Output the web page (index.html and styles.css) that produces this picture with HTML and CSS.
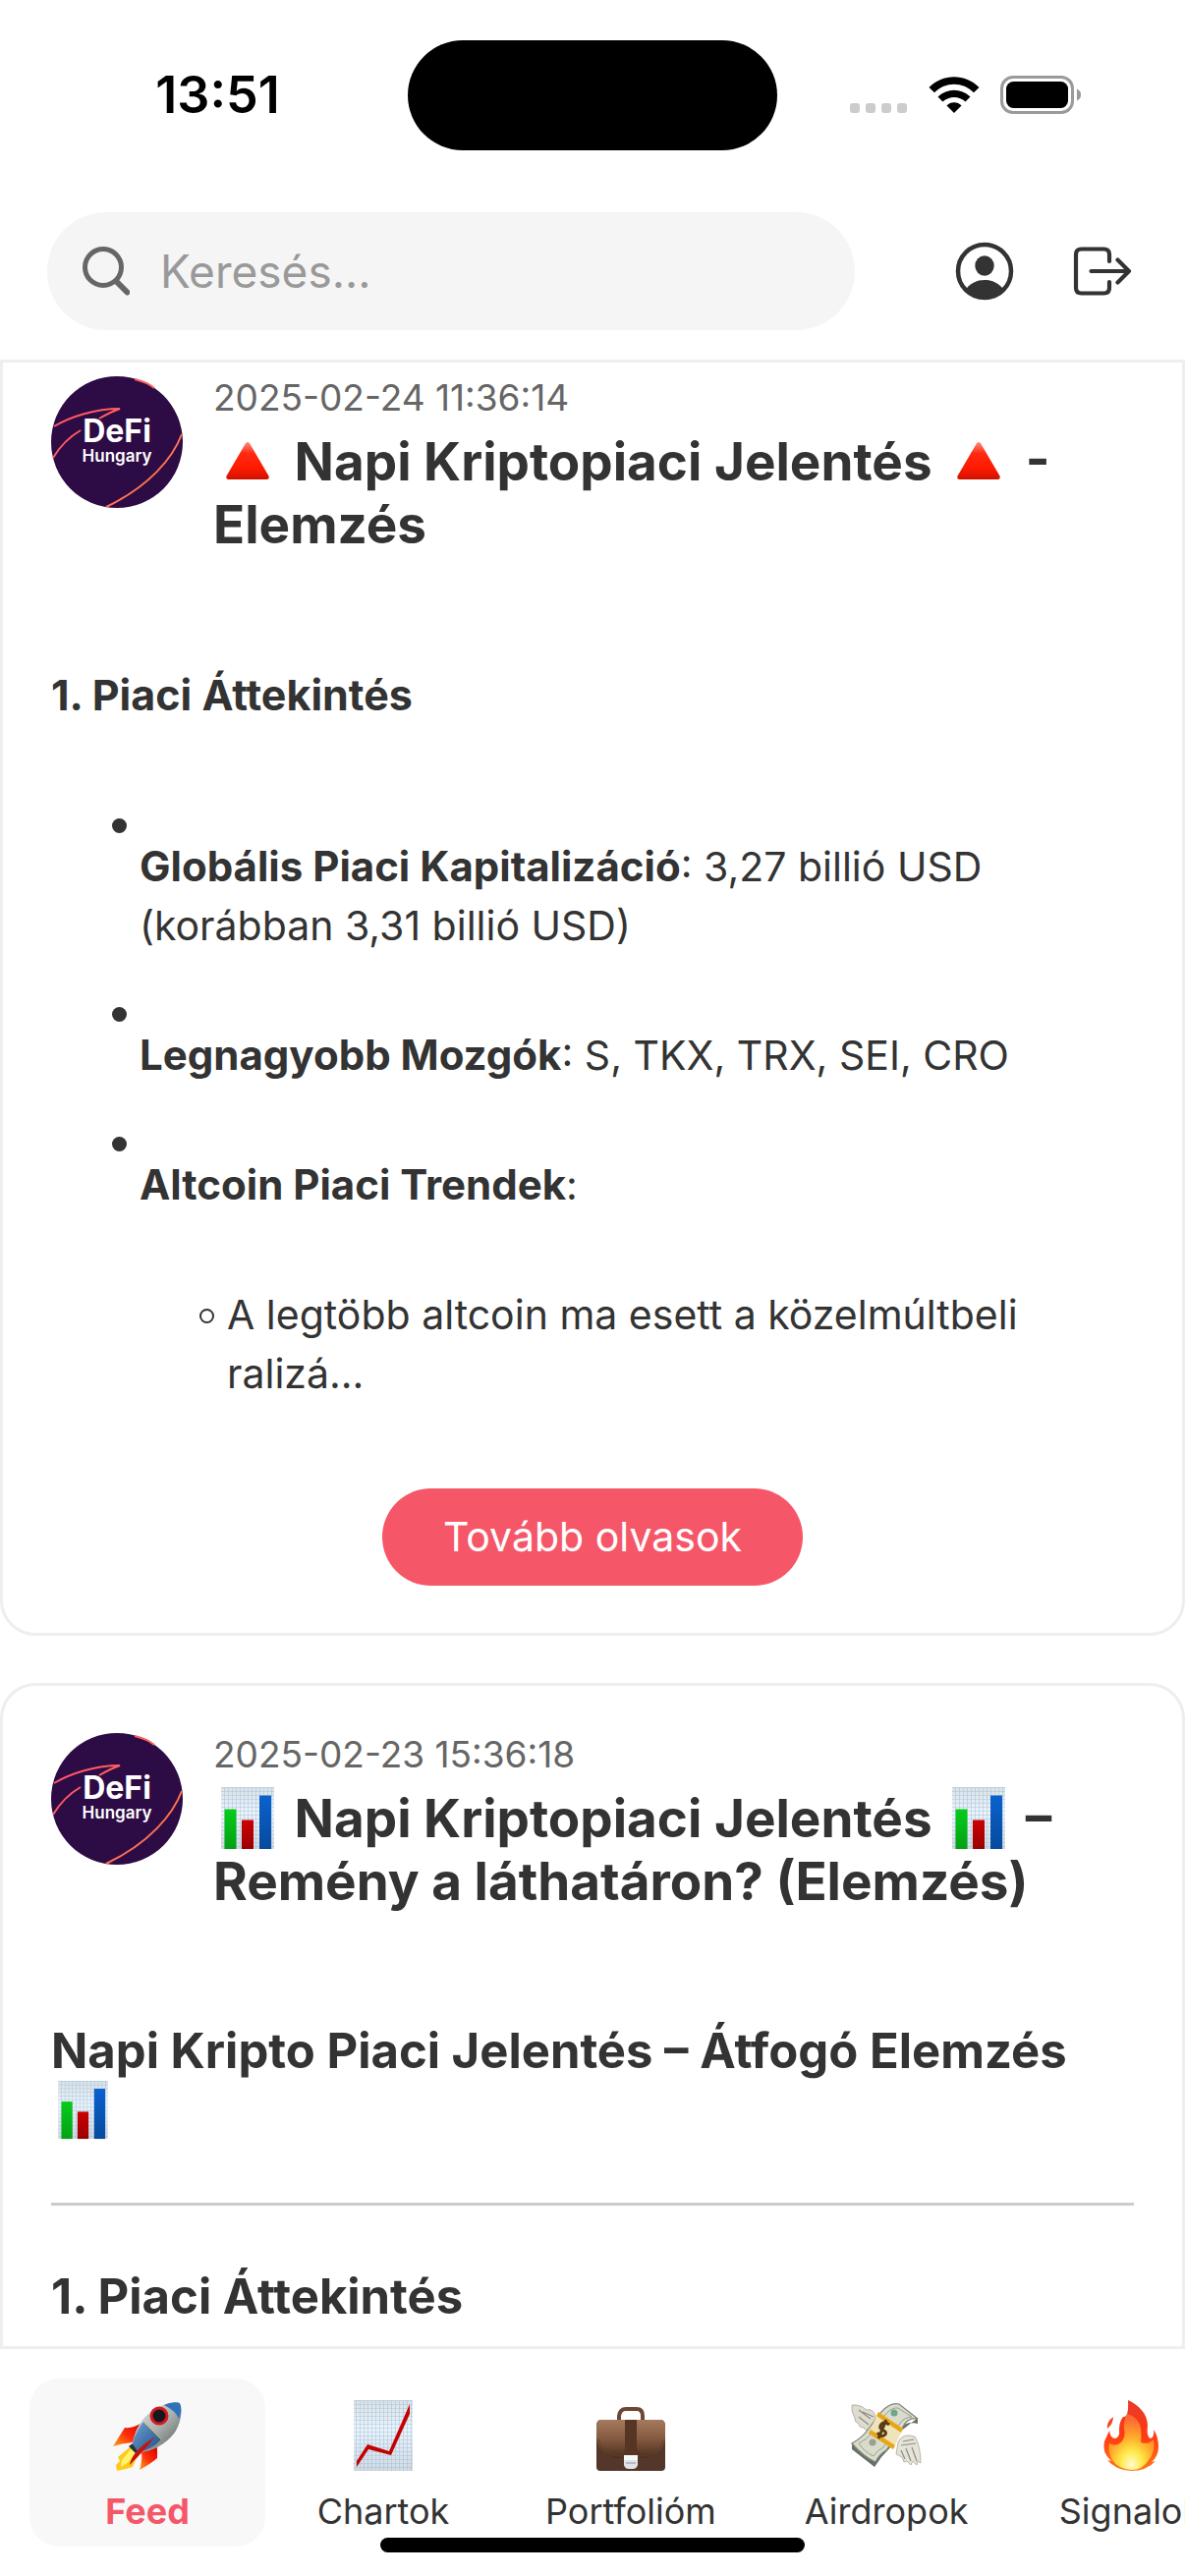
FILE: index.html
```html
<!DOCTYPE html>
<html lang="hu">
<head>
<meta charset="utf-8">
<meta name="viewport" content="width=device-width, initial-scale=1">
<title>DeFi Hungary – Feed</title>
<link rel="stylesheet" href="styles.css">
</head>
<body>
<svg class="sprite" aria-hidden="true">
  <defs>
    <linearGradient id="g-red" x1="0" y1="0" x2="0" y2="1"><stop offset="0" stop-color="#ff8a7a"/><stop offset=".3" stop-color="#ff2a12"/><stop offset=".7" stop-color="#ff1a00"/><stop offset="1" stop-color="#cc1200"/></linearGradient>
    <linearGradient id="g-paper" x1="0" y1="0" x2="0" y2="1"><stop offset="0" stop-color="#dde1e4"/><stop offset=".4" stop-color="#eef4fa"/><stop offset="1" stop-color="#d3d9df"/></linearGradient>
    <linearGradient id="g-green" x1="0" y1="0" x2="0" y2="1"><stop offset="0" stop-color="#06cc1c"/><stop offset="1" stop-color="#04a014"/></linearGradient>
    <linearGradient id="g-crimson" x1="0" y1="0" x2="0" y2="1"><stop offset="0" stop-color="#cc0000"/><stop offset="1" stop-color="#990000"/></linearGradient>
    <linearGradient id="g-blue" x1="0" y1="0" x2="0" y2="1"><stop offset="0" stop-color="#0a62cf"/><stop offset="1" stop-color="#064a9c"/></linearGradient>
    <linearGradient id="g-line" x1="0" y1="0" x2="1" y2="1"><stop offset="0" stop-color="#ff4d6d"/><stop offset="1" stop-color="#ff7f45"/></linearGradient>
    <pattern id="p-grid" width="4" height="4" patternUnits="userSpaceOnUse"><path d="M0 0H4M0 0V4" stroke="#8db9dd" stroke-width="1.600" opacity=".55"/></pattern>
    <symbol id="triangle" viewBox="0 0 64 64">
      <path d="M32 12Q33.500 12 34.500 14L53.500 46.500Q54.500 50 51.500 50H12.500Q9.500 50 10.500 46.500L29.500 14Q30.500 12 32 12Z" fill="url(#g-red)"/>
    </symbol>
    <symbol id="bars" viewBox="0 0 64 64">
      <path d="M5 0H59V63H5Z" fill="url(#g-paper)"/><path d="M5 0H59V63H5Z" fill="url(#p-grid)"/>
      <path d="M8.500 22.500h12V63h-12z" fill="url(#g-green)"/><path d="M26 33.500h12V63H26z" fill="url(#g-crimson)"/><path d="M44 8.500h12V63H44z" fill="url(#g-blue)"/>
    </symbol>
    <symbol id="logo" viewBox="0 0 134 134">
      <circle cx="67" cy="67" r="67" fill="#2d0b45"/>
      <g fill="none" stroke="url(#g-line)" stroke-width="2">
        <path d="M3 51C20 41 45 33 70 33C64 35 56 39 49 43M2 83C8 73 18 62 30 55M85 3Q98 6 105 12M133 59C124 83 100 112 56 133"/>
      </g>
    </symbol>
  </defs>
</svg>
<div class="app">
  <div class="status">
    <span class="status-time">13:51</span>
    <div class="island"></div>
    <div class="status-icons">
      <svg width="236" height="40" viewBox="0 0 236 40" aria-hidden="true">
        <g fill="#ccc"><rect y="28" width="10" height="10" rx="3"/><rect x="16" y="28" width="10" height="10" rx="3"/><rect x="32" y="28" width="10" height="10" rx="3"/><rect x="48" y="28" width="10" height="10" rx="3"/></g>
        <path d="M106 38 98.500 30.500C102 26 110 26 113.500 30.500Z"/>
        <path d="M89.500 21.500C99 12.500 113 12.500 122.500 21.500L117.500 26.500C111 20.500 101 20.500 94.500 26.500Z"/>
        <path d="M80.500 12C94.500-2.500 117.500-2.500 131.500 12L126 17.300C114.500 6 97.500 6 86 17.300Z"/>
        <rect x="154.500" y="1.500" width="72" height="36" rx="11.500" fill="none" stroke="#9a9a9a" stroke-width="3"/>
        <rect x="159" y="6" width="63" height="27" rx="7.500"/>
        <path d="M231 13.500Q235.500 16 235 19.500Q235.500 23 231 25.500Z" fill="#999"/>
      </svg>
    </div>
  </div>

  <header class="topbar">
    <label class="search">
      <svg class="search-icon" width="48" height="50" viewBox="0 0 48 50" fill="none" stroke="#666" stroke-linecap="round" aria-hidden="true"><circle cx="21" cy="21" r="18.500" stroke-width="5"/><path d="M34.500 35.500 45.500 46.500" stroke-width="6"/></svg>
      <input class="search-input" type="search" placeholder="Keresés..." aria-label="Keresés">
    </label>
    <div class="actions">
      <button class="icon-button" type="button" aria-label="Profil">
        <svg width="60" height="60" viewBox="0 0 60 60" fill="#333"><defs><clipPath id="c-face"><circle cx="30" cy="30" r="28"/></clipPath></defs><circle cx="30" cy="30" r="27" fill="none" stroke="#333" stroke-width="4.500"/><ellipse cx="30" cy="24.500" rx="9.700" ry="10.200"/><path d="M9 51C15 42 22 39 30 39S45 42 51 51V60H9Z" clip-path="url(#c-face)"/></svg>
      </button>
      <button class="icon-button" type="button" aria-label="Kijelentkezés">
        <svg width="60" height="60" viewBox="0 0 60 60" fill="none" stroke="#333" stroke-width="4.200" stroke-linecap="round" stroke-linejoin="round"><path d="M37 20V13Q37 7.500 31.500 7.500H8.500Q3 7.500 3 13V47Q3 52.500 8.500 52.500H31.500Q37 52.500 37 47V41M18.500 30H57M45.500 18.500 57 30 45.500 41.500"/></svg>
      </button>
    </div>
  </header>

  <main class="feed">
    <article class="card card-scrolled">
      <div class="card-head">
        <div class="avatar"><svg class="avatar-art" aria-hidden="true"><use href="#logo"/></svg><span class="avatar-name">DeFi</span><span class="avatar-place">Hungary</span></div>
        <div class="card-meta">
          <time class="date">2025-02-24 11:36:14</time>
          <h2 class="title"><svg class="emoji" aria-hidden="true"><use href="#triangle"/></svg> Napi Kriptopiaci Jelentés <svg class="emoji" aria-hidden="true"><use href="#triangle"/></svg> - Elemzés</h2>
        </div>
      </div>
      <div class="body">
        <p class="lead">1. Piaci Áttekintés</p>
        <ul class="list">
          <li class="item"><p class="item-text"><strong>Globális Piaci Kapitalizáció</strong>: 3,27 billió USD (korábban 3,31 billió USD)</p></li>
          <li class="item"><p class="item-text"><strong>Legnagyobb Mozgók</strong>: S, TKX, TRX, SEI, CRO</p></li>
          <li class="item"><div><p class="item-text"><strong>Altcoin Piaci Trendek</strong>:</p>
            <ul class="sublist"><li class="subitem">A legtöbb altcoin ma esett a közelmúltbeli ralizá...</li></ul></div></li>
        </ul>
      </div>
      <button class="more" type="button">Tovább olvasok</button>
    </article>

    <article class="card">
      <div class="card-head">
        <div class="avatar"><svg class="avatar-art" aria-hidden="true"><use href="#logo"/></svg><span class="avatar-name">DeFi</span><span class="avatar-place">Hungary</span></div>
        <div class="card-meta">
          <time class="date">2025-02-23 15:36:18</time>
          <h2 class="title"><svg class="emoji" aria-hidden="true"><use href="#bars"/></svg> Napi Kriptopiaci Jelentés <svg class="emoji" aria-hidden="true"><use href="#bars"/></svg> – Remény a láthatáron? (Elemzés)</h2>
        </div>
      </div>
      <div class="body">
        <h3 class="heading">Napi Kripto Piaci Jelentés – Átfogó Elemzés <svg class="emoji emoji-small" aria-hidden="true"><use href="#bars"/></svg></h3>
        <hr class="rule">
        <h3 class="heading">1. Piaci Áttekintés</h3>
      </div>
    </article>
  </main>

  <nav class="tabs">
    <a class="tab tab-active" href="#feed">
      <svg class="tab-icon" viewBox="0 0 72 72" aria-hidden="true">
        <defs><linearGradient id="g-hull" x1="0" y1="0" x2="1" y2="1"><stop offset="0" stop-color="#e8ebea"/><stop offset=".5" stop-color="#aeb4b2"/><stop offset="1" stop-color="#4d5654"/></linearGradient><linearGradient id="g-fin" x1="1" y1="0" x2="0" y2="1"><stop offset="0" stop-color="#d90000"/><stop offset=".5" stop-color="#ff2b0a"/><stop offset="1" stop-color="#ffa21a"/></linearGradient><linearGradient id="g-steel" x1="0" y1="0" x2="1" y2="1"><stop offset="0" stop-color="#6fa3d8"/><stop offset="1" stop-color="#1f4b7e"/></linearGradient></defs>
        <path d="M1 47 13 28Q22 29 30 23L21 43Q10 44 1 47Z" fill="url(#g-fin)"/>
        <path d="M46 48V59Q39 65 28 71Q31 62 30 53Z" fill="url(#g-fin)"/>
        <path d="M19 47 6 58 8 62 4 66 5 72 14 70 21 68 24 61 28 55Z" fill="#ffc91c"/><path d="M19 50 10 61 9 68 17 63 24 54Z" fill="#fff36a"/>
        <path d="M17 47 21 44 27 51 24 54Z" fill="#26343b"/>
        <path d="M21 44C24 22 42 3 67 2C73 5 71 23 63 34C55 44 41 53 27 53Z" fill="url(#g-hull)"/>
        <path d="M53 5Q61 1 69 3Q72 10 68 19Q65 11 53 5Z" fill="#2f72b8"/>
        <path d="M21 44Q24 32 32 22L50 40Q41 50 27 53Z" fill="url(#g-steel)"/><path d="M32 22 50 40" stroke="#d5b652"/>
        <path d="M43 38Q35 49 18 66Q20 52 43 38Z" fill="#c91010"/>
        <circle cx="48" cy="16" r="8" fill="#15181c" stroke="#d81820" stroke-width="3"/>
      </svg>
      <span>Feed</span>
    </a>
    <a class="tab" href="#chartok">
      <svg class="tab-icon" viewBox="0 0 72 72" aria-hidden="true"><path d="M6 0H66V72H6Z" fill="url(#g-paper)"/><path d="M6 0H66V72H6Z" fill="url(#p-grid)"/><path d="M9 62 20 45 42 52 63 4V14L44 56 21 50 9 68Z" fill="#c40000"/></svg>
      <span>Chartok</span>
    </a>
    <a class="tab" href="#portfoliom">
      <svg class="tab-icon" viewBox="0 0 72 72" aria-hidden="true">
        <defs><linearGradient id="g-case" x1="0" y1="0" x2="0" y2="1"><stop offset="0" stop-color="#a57a5c"/><stop offset=".5" stop-color="#84593f"/><stop offset="1" stop-color="#4a2d1f"/></linearGradient></defs>
        <path d="M24 20V16Q25 9 31 9H42Q48 9 48 16V20" fill="none" stroke="#6d4734" stroke-width="4"/>
        <path d="M5 20H67Q71 21 71 26V68Q71 72 67 72H5Q1 72 1 68V26Q1 21 5 20Z" fill="#55362a"/>
        <path d="M4 20H68Q71 22 71 27V38Q69 57 48 59H24Q3 57 1 38V27Q1 22 4 20Z" fill="url(#g-case)"/>
        <path d="M3 40Q6 56 25 57H47Q66 56 69 40" fill="none" stroke="#5f3d2c"/>
        <path d="M30 20H42V50Q46 53 45 60H28Q27 53 30 50Z" fill="#563525"/>
        <path d="M29 56H43V66Q42 70 38 70H34Q30 70 29 66Z" fill="#dfe3e6"/><path d="M29 56h14v5H29z" fill="#f7f8f9"/><path d="M31 64h10" stroke="#8d9499"/>
      </svg>
      <span>Portfolióm</span>
    </a>
    <a class="tab" href="#airdropok">
      <svg class="tab-icon" viewBox="0 0 72 72" aria-hidden="true">
        <path d="M1 5Q9 4 16 10Q23 8 25 17L20 32Q14 31 13 28Q8 28 8 24Q3 22 4 18Q0 12 1 5Z" fill="#dedcd1" stroke="#aaa798" stroke-width=".8"/><path d="M8 10 20 19M8 17 18 25M12 12 23 17" stroke="#8f8c7e" stroke-width="1.200"/>
        <path d="M1 44V50L24 68 31 58 44 44 52 28Q56 21 68 24V18L40 40 25 61Z" fill="#667067"/>
        <path d="M1 44Q12 38 18 29L31 12Q40 2 49 4L68 19Q58 17 53 27L36 51Q29 55 25 63Q13 58 1 44Z" fill="#d9dccb" stroke="#7d8477" stroke-width="1.200"/>
        <path d="M8 44Q16 40 22 33L34 16Q41 7 48 8L62 17Q54 17 49 25L33 48Q27 51 23 57Q14 53 8 44Z" fill="none" stroke="#979f8f"/>
        <circle cx="44" cy="13" r="3.500" fill="#6fa58c"/><circle cx="22" cy="43" r="3.500" fill="#9aa191"/>
        <path d="M28 12 53 29 43 50 18 34Z" fill="#efe3b8"/><path d="M28 12 53 29 51 33 26 16ZM20 30 45 46 43 50 18 34Z" fill="#e9a514"/>
        <path d="M39 25Q33 20 30 26C28 32 38 30 35 35Q31 39 27 33M36 20 28 39" fill="none" stroke="#5a3c12" stroke-width="3"/>
        <path d="M48 43Q52 33 65 37Q71 47 71 64L68 62 67 66 63 62 61 66 57 62 54 63 52 58 46 55Z" fill="#e6e4d9" stroke="#aaa798" stroke-width=".8"/><path d="M53 42 64 40M51 46 66 44M51 51 55 60M56 49 61 62M62 48 67 62" fill="none" stroke="#8f8c7e" stroke-width="1.200"/>
      </svg>
      <span>Airdropok</span>
    </a>
    <a class="tab" href="#signalok">
      <svg class="tab-icon" viewBox="0 0 72 72" aria-hidden="true">
        <defs><linearGradient id="g-fire" x1="0" y1="0" x2="0" y2="1"><stop offset="0" stop-color="#e83a2a"/><stop offset=".5" stop-color="#ff3a12"/><stop offset="1" stop-color="#ff7a1a"/></linearGradient><radialGradient id="g-core" cx=".5" cy=".9" r=".8"><stop offset="0" stop-color="#fffbd0"/><stop offset=".3" stop-color="#ffe94a"/><stop offset=".6" stop-color="#ffac2a"/><stop offset="1" stop-color="#ff6a35"/></radialGradient></defs>
        <path d="M33 0C44 5 53 14 53 26C52 33 53 38 56 39Q60 38 59 30Q64 37 64 48Q64 57 57 63L61 62Q52 72 36 72Q20 71 12 61L16 62Q6 53 9 42L14 31Q15 39 20 39Q25 38 24 30Q24 22 28 17Q34 18 33 0Z" fill="url(#g-fire)"/>
        <path d="M32 14Q44 17 46 29Q47 36 46 43Q54 46 59 40Q61 53 54 61Q48 71 36 71Q23 70 17 61Q12 53 14 44Q20 48 26 43Q31 37 29 29Q28 22 32 14Z" fill="url(#g-core)"/>
        <path d="M12 29Q11 22 18 17Q18 24 12 29Z" fill="#f4452a"/>
      </svg>
      <span>Signalok</span>
    </a>
    <div class="home-bar"></div>
  </nav>
</div>
</body>
</html>
```
FILE: styles.css
```css
*,
*::before {
  box-sizing: border-box;
}

body {
  margin: 0;
  background: #fff;
  color: #333;
  font-family: Inter, "Liberation Sans", sans-serif;
  font-size: 41px;
  line-height: 60px;
}

h2,
h3,
p,
ul {
  margin: 0;
  padding: 0;
}

button,
input {
  border: 0;
  background: none;
  font: inherit;
  color: inherit;
}

svg {
  display: block;
}

strong {
  font-size: 42px;
  font-weight: 700;
}

.sprite {
  position: absolute;
  width: 0;
  height: 0;
}

.app {
  display: flex;
  flex-direction: column;
  height: 100vh;
  overflow: hidden;
}

/* Status bar */
.status {
  display: grid;
  grid-template-columns: 1fr 376px 1fr;
  align-items: center;
  padding: 41px 0 0;
}

.status-time {
  padding-left: 28px;
  color: #000;
  font-size: 52px;
  font-weight: 600;
  text-align: center;
}

.island {
  height: 112px;
  border-radius: 56px;
  background: #000;
}

.status-icons {
  padding-left: 74px;
}

/* Search and account actions */
.topbar {
  display: flex;
  align-items: center;
  gap: 72px;
  padding: 63px 24px 30px 48px;
  border-bottom: 3px solid #eee;
}

.search {
  display: flex;
  flex: 1;
  align-items: center;
  gap: 31px;
  min-width: 0;
  height: 120px;
  padding: 0 36px;
  border-radius: 60px;
  background: #f5f5f5;
}

.search-icon {
  flex: none;
}

.search-input {
  flex: 1;
  min-width: 0;
  padding: 0;
  outline: 0;
  font-size: 46px;
}

.search-input::placeholder {
  color: #999;
  opacity: 1;
}

.actions {
  display: flex;
}

.icon-button {
  display: grid;
  place-items: center;
  width: 120px;
  height: 120px;
  padding: 0;
}

/* Feed */
.feed {
  display: flex;
  flex: 1;
  flex-direction: column;
  gap: 48px;
  min-height: 0;
  overflow: hidden;
}

.card {
  flex: none;
  padding: 48px 49px;
  border: 3px solid #eee;
  border-radius: 36px;
}

/* The first card has been scrolled partly under the top bar. */
.card-scrolled {
  margin-top: -37px;
}

.card-head {
  display: flex;
  gap: 31px;
}

.avatar {
  position: relative;
  display: flex;
  flex: none;
  flex-direction: column;
  align-items: center;
  width: 134px;
  height: 134px;
  padding-top: 39px;
  color: #fff;
}

.avatar-art {
  position: absolute;
  inset: 0;
  width: 134px;
  height: 134px;
}

.avatar-name,
.avatar-place {
  position: relative;
}

.avatar-name {
  font-size: 32px;
  font-weight: 700;
  line-height: 34px;
}

.avatar-place {
  font-size: 17px;
  font-weight: 600;
  line-height: 17px;
}

.card-meta {
  flex: 1;
}

.date {
  display: block;
  margin-bottom: 11px;
  color: #666;
  font-size: 37px;
  line-height: 44px;
}

.title {
  font-size: 53px;
  font-weight: 700;
  line-height: 64px;
}

.emoji {
  display: inline-block;
  width: 70px;
  height: 64px;
  vertical-align: -13px;
}

.emoji-small {
  width: 65px;
  height: 60px;
  vertical-align: -12px;
}

.body {
  padding-top: 111px;
}

.lead {
  font-size: 43px;
  font-weight: 700;
}

.list {
  display: flex;
  flex-direction: column;
  gap: 53px;
  padding: 96px 50px 0 62px;
}

.item,
.subitem {
  display: grid;
  grid-template-columns: 15px 1fr;
  gap: 13px;
}

.item::before {
  content: "";
  height: 15px;
  border-radius: 50%;
  background: #333;
}

.item-text {
  padding-top: 19px;
}

.sublist {
  padding: 72px 0 0 61px;
}

.subitem::before {
  content: "";
  height: 15px;
  margin-top: 24px;
  border: 2px solid #333;
  border-radius: 50%;
}

.more {
  display: block;
  margin: 87px auto 0;
  padding: 19px 62px 20px;
  border-radius: 50px;
  background: #f55768;
  color: #fff;
}

.heading {
  font-size: 49px;
  font-weight: 700;
  line-height: 60px;
}

.rule {
  margin: 63px 0;
  border: 0;
  border-top: 3px solid #ccc;
}

/* Bottom tabs */
.tabs {
  position: relative;
  display: flex;
  padding: 30px;
  border-top: 3px solid #eee;
  background: #fff;
}

.tab {
  display: flex;
  flex: none;
  flex-direction: column;
  align-items: center;
  gap: 19px;
  min-width: 240px;
  padding: 22px 45px 14px;
  border-radius: 30px;
  color: #333;
  font-size: 36px;
  line-height: 44px;
  text-decoration: none;
}

.tab-active {
  background: #f8f8f8;
  color: #f55768;
  font-weight: 700;
}

.tab-icon {
  width: 72px;
  height: 72px;
}

.home-bar {
  position: absolute;
  bottom: 24px;
  left: 50%;
  width: 432px;
  height: 15px;
  margin-left: -216px;
  border-radius: 8px;
  background: #000;
}
```
